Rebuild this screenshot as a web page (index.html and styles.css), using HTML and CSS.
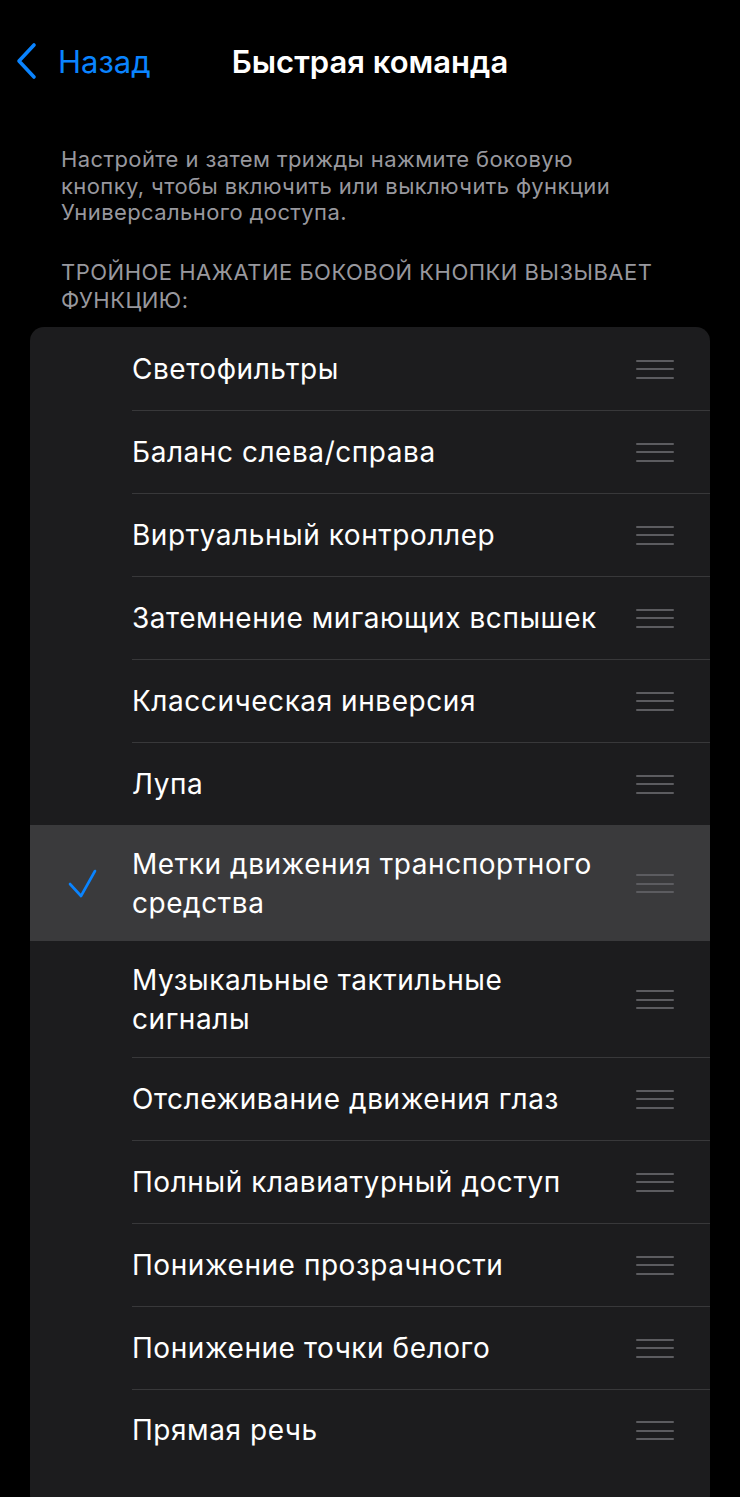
FILE: index.html
```html
<!DOCTYPE html>
<html lang="ru">
<head>
    <meta charset="UTF-8">
    <meta name="viewport" content="width=device-width, initial-scale=1.0">
    <link rel="stylesheet" href="styles.css">
    <title>Быстрая команда</title>
</head>
<body>
    <header class="navbar">
        <a class="back" href="#">
            <svg class="chevron" width="24" height="38" viewBox="0 0 24 38">
                <path d="M20 3 L5 19 L20 35" fill="none" stroke="#0a84ff" stroke-width="3.6" stroke-linecap="round" stroke-linejoin="round"/>
            </svg>
            <span>Назад</span>
        </a>
        <h1 class="title">Быстрая команда</h1>
    </header>

    <main>
        <p class="note">Настройте и затем трижды нажмите боковую кнопку, чтобы включить или выключить функции Универсального доступа.</p>
        <h2 class="section-head">ТРОЙНОЕ НАЖАТИЕ БОКОВОЙ КНОПКИ ВЫЗЫВАЕТ ФУНКЦИЮ:</h2>

        <ul class="list">
            <li class="row"><span class="check"></span><span class="label">Светофильтры</span><span class="grip"><i></i><i></i><i></i></span></li>
            <li class="row"><span class="check"></span><span class="label">Баланс слева/справа</span><span class="grip"><i></i><i></i><i></i></span></li>
            <li class="row"><span class="check"></span><span class="label">Виртуальный контроллер</span><span class="grip"><i></i><i></i><i></i></span></li>
            <li class="row"><span class="check"></span><span class="label">Затемнение мигающих вспышек</span><span class="grip"><i></i><i></i><i></i></span></li>
            <li class="row"><span class="check"></span><span class="label">Классическая инверсия</span><span class="grip"><i></i><i></i><i></i></span></li>
            <li class="row"><span class="check"></span><span class="label">Лупа</span><span class="grip"><i></i><i></i><i></i></span></li>
            <li class="row selected">
                <span class="check">
                    <svg width="30" height="30" viewBox="0 0 30 30">
                        <path d="M3 15 L14 27 L28 2" fill="none" stroke="#0a84ff" stroke-width="2.6" stroke-linecap="round" stroke-linejoin="round"/>
                    </svg>
                </span>
                <span class="label">Метки движения транспортного средства</span><span class="grip"><i></i><i></i><i></i></span>
            </li>
            <li class="row"><span class="check"></span><span class="label">Музыкальные тактильные сигналы</span><span class="grip"><i></i><i></i><i></i></span></li>
            <li class="row"><span class="check"></span><span class="label">Отслеживание движения глаз</span><span class="grip"><i></i><i></i><i></i></span></li>
            <li class="row"><span class="check"></span><span class="label">Полный клавиатурный доступ</span><span class="grip"><i></i><i></i><i></i></span></li>
            <li class="row"><span class="check"></span><span class="label">Понижение прозрачности</span><span class="grip"><i></i><i></i><i></i></span></li>
            <li class="row"><span class="check"></span><span class="label">Понижение точки белого</span><span class="grip"><i></i><i></i><i></i></span></li>
            <li class="row last"><span class="check"></span><span class="label">Прямая речь</span><span class="grip"><i></i><i></i><i></i></span></li>
        </ul>
    </main>
</body>
</html>
```

FILE: styles.css
```css
* {
 margin: 0;
 padding: 0;
 box-sizing: border-box;
 font-family: Inter, Roboto, "Noto Sans", sans-serif;
}

body {
 background-color: #000;
 color: #fff;
 width: 740px;
 height: 1497px;
 overflow: hidden;
}

.navbar {
 height: 122px;
 display: flex;
 align-items: center;
 position: relative;
 padding: 0 0 0 14px;
}

.back {
 display: flex;
 align-items: center;
 gap: 20px;
 color: #0a84ff;
 text-decoration: none;
 font-size: 31px;
 font-weight: 400;
}

.title {
 position: absolute;
 left: 0;
 right: 0;
 text-align: center;
 font-size: 31px;
 font-weight: 600;
 pointer-events: none;
}

main {
 padding: 24px 30px 0;
}

.note {
 padding: 0 70px 0 31px;
 font-size: 22px;
 line-height: 26.5px;
 letter-spacing: 0.4px;
 color: #98989e;
}

.section-head {
 padding: 32px 20px 0 31px;
 font-size: 22px;
 line-height: 28px;
 font-weight: 400;
 letter-spacing: 0.5px;
 color: #98989e;
}

.list {
 list-style-type: none;
 margin-top: 13px;
 background-color: #1c1c1e;
 border-radius: 14px;
 overflow: hidden;
}

.row {
 display: flex;
 align-items: center;
 min-height: 83px;
 padding: 20px 0 18px;
 position: relative;
}

.row.last {
 min-height: 120px;
 padding-bottom: 56px;
}

.row + .row::before {
 content: "";
 position: absolute;
 top: 0;
 left: 102px;
 right: 0;
 height: 1px;
 background-color: #38383a;
}

.row.selected {
 background-color: #3a3a3c;
}

.row.selected::before,
.row.selected + .row::before {
 display: none;
}

.check {
 width: 102px;
 flex-shrink: 0;
 display: flex;
 justify-content: center;
 padding-left: 1px;
}

.label {
 flex: 1;
 font-size: 28px;
 line-height: 39px;
 letter-spacing: 0.55px;
 padding-right: 20px;
}

.grip {
 width: 38px;
 margin-right: 36px;
 display: flex;
 flex-direction: column;
 gap: 6.5px;
 flex-shrink: 0;
}

.grip i {
 display: block;
 height: 2px;
 border-radius: 1px;
 background-color: #5c5c60;
}
```
